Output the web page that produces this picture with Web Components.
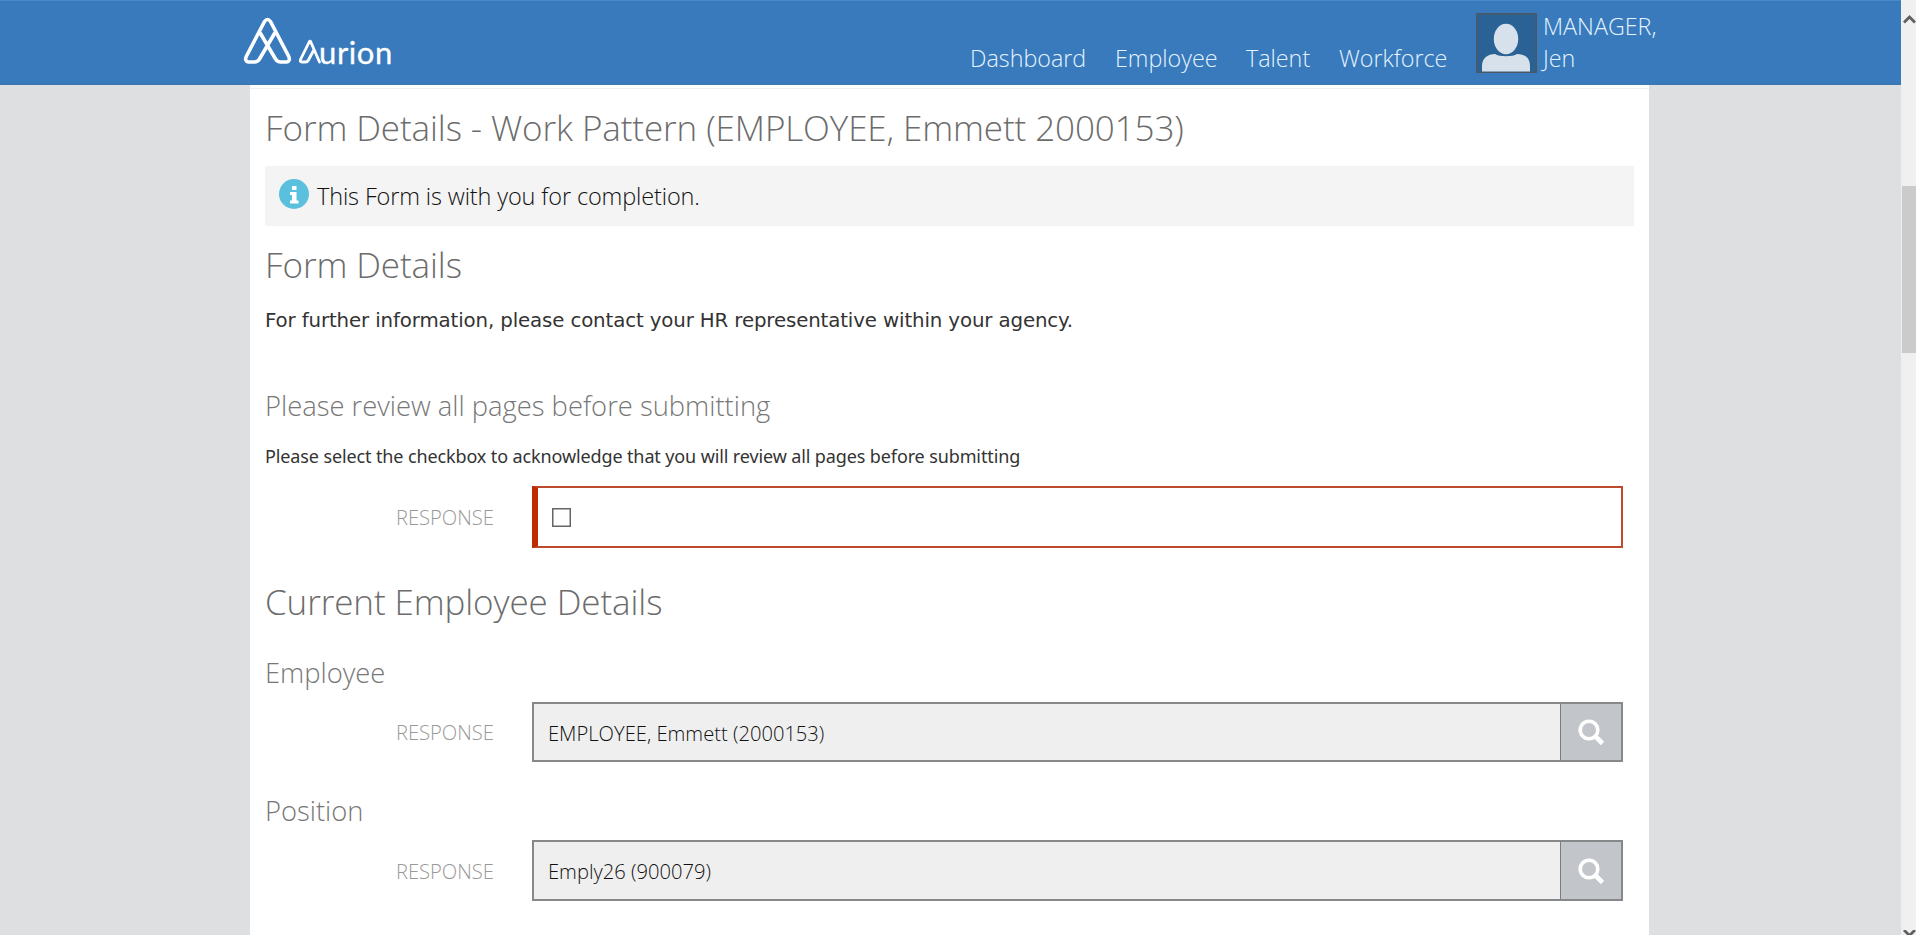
<!DOCTYPE html>
<html lang="en">
<head>
<meta charset="utf-8">
<title>Aurion</title>
<style>
html,body{margin:0;height:100%;overflow:hidden}
body{font-family:"Open Sans","Noto Sans",sans-serif;font-weight:300;color:#222}
</style>
</head>
<body>
<aurion-app></aurion-app>
<script>
const define=(name,html)=>customElements.define(name,class extends HTMLElement{
  constructor(){super();const t=document.createElement('template');t.innerHTML=html;
    this.attachShadow({mode:'open'}).append(t.content.cloneNode(true));}
});

define('aurion-logo',`<style>
:host{display:flex;align-items:flex-start;width:170px;height:85px;color:#fff}
svg{display:block;flex:none}
.mark{width:80px;height:85px}
span{font:400 31px/40px Lato,sans-serif;letter-spacing:.6px;margin:32px 0 0 -3px;white-space:nowrap;-webkit-text-stroke:.3px #fff}
</style>
<svg class="mark" viewBox="242 0 80 85" fill="none" stroke="#fff" stroke-width="3.6" stroke-linejoin="round" stroke-linecap="round">
<path d="M260.500 33.500L275.500 59Q277.500 62 280.500 62H286.500Q291 61 288.500 56L270.500 21.500Q267.500 17.500 264.500 21.500L246.500 56Q244 61 248.500 62H254.500Q257.500 62 259.500 59L274.500 33.500"/>
<path stroke-width="2.8" d="M319.500 62L310.800 42Q310 40.500 309.200 42L300.500 59.500Q299.500 62 302 62H305.500Q307.500 62 308.500 60L313.500 50.500"/></svg>
<span>urion</span>`);

define('nav-item',`<style>:host{display:block;font-size:23.300px;line-height:32px;color:#e4f3ff;white-space:nowrap}</style><slot></slot>`);

define('user-badge',`<style>
:host{display:flex;color:#e4f3ff;font-size:23.300px;line-height:32px}
svg{display:block;flex:none;margin-top:-1px}
.n{padding:10px 0 0 6px;margin-top:-1px;white-space:pre-line;width:125px}
</style><svg width="61" height="85" viewBox="0 0 61 85"><rect x=".8" y="13.800" width="59.400" height="58.400" fill="#2b6295" stroke="#4c5862" stroke-width="1.500"/>
<path fill="#d7e1eb" d="M6 71.500V66C6 58 12 54 19 54C23 57 37 57 41 54C49 54 54 58 54 66V71.500Z"/>
<ellipse cx="30" cy="39" rx="12.200" ry="15.200" fill="#d7e1eb"/></svg><div class="n"><slot></slot></div>`);

define('app-header',`<style>
:host{display:flex;box-sizing:border-box;height:85px;padding-left:242px;background:#387abb;border-top:1px solid #4a89c6;border-bottom:1px solid #3d76ad}
*{margin-top:-1px}
nav{display:flex;margin-left:558px;padding-top:42px;width:506px;gap:29px}
</style><aurion-logo></aurion-logo><nav><slot name="nav"></slot></nav><slot name="user"></slot>`);

define('scroll-rail',`<style>
:host{display:flex;flex-direction:column;width:15px;height:935px;background:#f0f0f0;flex:none}
svg{display:block}
i{display:block;height:167px;background:#cbcbcb;margin:0 0 577px 1px}
</style><svg width="15" height="186" viewBox="0 0 15 186"><path d="M3 22.500L8.500 17L14 22.500" fill="none" stroke="#606060" stroke-width="2.800"/></svg><i></i>
<svg width="15" height="5" viewBox="0 0 15 5"><path d="M3 0L8.500 5.500L14 0" fill="none" stroke="#606060" stroke-width="2.800"/></svg>`);

define('page-heading',`<style>:host{display:block;font-size:35px;letter-spacing:-.1px;line-height:78px;height:76px;color:#6c6c6c;white-space:nowrap}</style><slot></slot>`);
define('field-heading',`<style>:host{display:block;font-size:27.350px;line-height:42px;height:40px;color:#777;white-space:nowrap}</style><slot></slot>`);
define('help-text',`<style>:host{display:block;font-weight:400;line-height:36px;height:36px;color:#333;white-space:nowrap}</style><slot></slot>`);

define('info-bar',`<style>
:host{display:flex;align-items:center;height:60px;margin:1px 0 0;background:#f4f4f4;font-size:23.500px;letter-spacing:-.13px;line-height:60px;color:#111;white-space:nowrap}
svg{margin:-4px 8px 0 14px}
</style><svg width="30" height="30" viewBox="0 0 30 30"><circle cx="15" cy="15" r="15" fill="#5bc0de"/><path fill="#fff" d="M13 7H17.500V11H13ZM11 13H17.500V21.500H19.500V24.500H11V21.500H13V16H11Z"/></svg><span><slot></slot></span>`);

define('response-row',`<style>
:host{display:flex;align-items:center;height:var(--h,60px)}
.l{width:229px;margin:0 38px 0 0;text-align:right;font-size:20.200px;color:#999;line-height:30px}
.c{display:flex;width:1091px;height:100%}
</style><div class="l"><span>RESPONSE</span></div><div class="c"><slot></slot></div>`);

define('check-field',`<style>
:host{display:flex;align-items:center;box-sizing:border-box;width:100%;height:100%;border:2px solid #bd4a2c;border-left:6px solid #bf2a00;padding-left:14px;background:#fff}
svg{display:block;margin-top:1px}
</style><svg width="19" height="19" viewBox="0 0 19 19"><rect x=".75" y=".75" width="17.500" height="17.500" fill="#fff" stroke="#666" stroke-width="1.500"/></svg>`);

define('lookup-field',`<style>
:host{display:flex;box-sizing:border-box;width:100%;height:100%;border:2px solid #86888a;background:#efefef;font-size:20.150px;color:#111}
.v{flex:1;display:flex;align-items:center;padding:1px 0 0 14px;white-space:nowrap}
.b{width:60px;border-left:1px solid #7b7e81;background:#c2c6ca;display:flex;align-items:center;justify-content:center}
svg{margin:0}
</style><div class="v"><span><slot></slot></span></div><div class="b"><svg width="28" height="28" viewBox="0 0 28 28" fill="none" stroke="#fff"><circle cx="12" cy="12" r="8.800" stroke-width="3.600"/><path d="M18.500 18.500L25.500 25.500" stroke-width="4.600"/></svg></div>`);

define('aurion-app',`<style>
:host{display:flex;width:1916px;height:935px;background:#dedfe1;overflow:hidden}
.page{width:1901px}
main{box-sizing:border-box;width:1399px;height:850px;margin-left:250px;padding:0 15px;background:#fff;overflow:hidden}
.edge{height:3px;border-bottom:1px solid #f0f0f0;margin:0 -15px}
</style>
<div class="page">
<app-header>
<nav-item slot="nav" style="width:116px" >Dashboard</nav-item><nav-item slot="nav" style="width:102px">Employee</nav-item><nav-item slot="nav" style="width:64px">Talent</nav-item><nav-item slot="nav">Workforce</nav-item>
<user-badge slot="user">MANAGER,
Jen</user-badge>
</app-header>
<main><div class="edge"></div>
<page-heading>Form Details - Work Pattern (EMPLOYEE, Emmett 2000153)</page-heading>
<info-bar>This Form is with you for completion.</info-bar>
<page-heading>Form Details</page-heading>
<help-text style="font-family:'DejaVu Sans',sans-serif;font-size:19.800px;letter-spacing:-.13px;line-height:38px">For further information, please contact your HR representative within your agency.</help-text>
<field-heading style="margin-top:47px">Please review all pages before submitting</field-heading>
<help-text style="margin-top:13px;font-family:'Noto Sans',sans-serif;font-size:18px;letter-spacing:-.12px">Please select the checkbox to acknowledge that you will review all pages before submitting</help-text>
<response-row style="margin-top:12px;--h:62px"><check-field></check-field></response-row>
<page-heading style="margin-top:15px">Current Employee Details</page-heading>
<field-heading style="margin-top:13px">Employee</field-heading>
<response-row style="margin-top:10px"><lookup-field>EMPLOYEE, Emmett (2000153)</lookup-field></response-row>
<field-heading style="margin-top:28px">Position</field-heading>
<response-row style="margin-top:10px;--h:61px"><lookup-field>Emply26 (900079)</lookup-field></response-row>
</main></div>
<scroll-rail></scroll-rail>`);
</script>
</body>
</html>
